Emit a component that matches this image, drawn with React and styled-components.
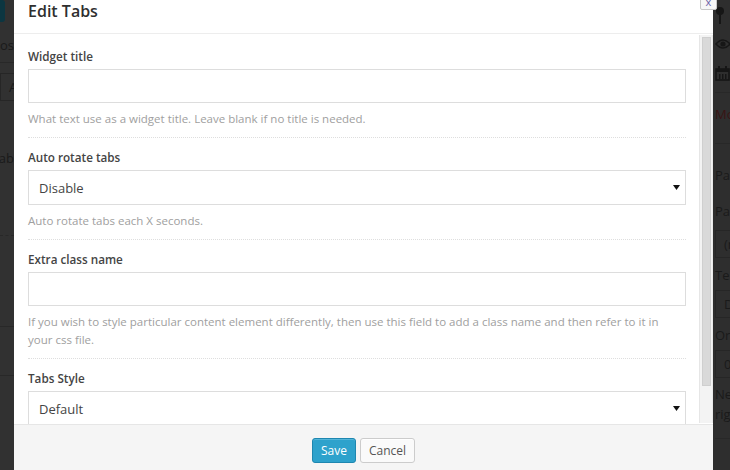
import React from 'react'
import styled, { createGlobalStyle } from 'styled-components'

const GlobalStyle = createGlobalStyle`
  html, body {
    margin: 0;
    padding: 0;
    background: #313131;
  }
  body {
    font-family: "Open Sans", "Liberation Sans", sans-serif;
  }
`

const fields = [
  {
    label: 'Widget title',
    kind: 'input',
    help: ['What text use as a widget title. Leave blank if no title is needed.'],
  },
  {
    label: 'Auto rotate tabs',
    kind: 'select',
    value: 'Disable',
    help: ['Auto rotate tabs each X seconds.'],
  },
  {
    label: 'Extra class name',
    kind: 'input',
    help: [
      'If you wish to style particular content element differently, then use this field to add a class name and then refer to it in',
      'your css file.',
    ],
  },
  {
    label: 'Tabs Style',
    kind: 'select',
    value: 'Default',
    help: [],
  },
]

const Arrow = () => (
  <svg width="7" height="5" viewBox="0 0 7 5">
    <polygon points="0,0 7,0 3.5,5" fill="#111" />
  </svg>
)

const PinIcon = () => (
  <svg width="10" height="18" viewBox="0 0 10 18">
    <circle cx="5" cy="5" r="4" fill="#161616" />
    <rect x="4" y="8" width="2" height="10" fill="#161616" />
  </svg>
)

const EyeIcon = () => (
  <svg width="16" height="12" viewBox="0 0 16 12">
    <path d="M1 6 Q8 -2 15 6 Q8 14 1 6 Z" fill="none" stroke="#161616" strokeWidth="1.6" />
    <circle cx="8" cy="6" r="2.6" fill="#161616" />
  </svg>
)

const CalendarIcon = () => (
  <svg width="15" height="15" viewBox="0 0 15 15">
    <rect x="1" y="3" width="13" height="11" fill="none" stroke="#161616" strokeWidth="1.6" />
    <rect x="1" y="3" width="13" height="3" fill="#161616" />
    <rect x="3" y="0" width="2" height="4" fill="#161616" />
    <rect x="10" y="0" width="2" height="4" fill="#161616" />
    <rect x="4" y="8" width="1.5" height="5" fill="#161616" />
    <rect x="7" y="8" width="1.5" height="5" fill="#161616" />
    <rect x="10" y="8" width="1.5" height="5" fill="#161616" />
  </svg>
)

const App = () => {
  return (
    <>
      <GlobalStyle />
      <Screen>
        <LeftStrip>
          <TealButton />
          <SideText $top={14}>Choos</SideText>
          <SideLine />
          <SideBox $top={10}>Add el</SideBox>
          <SideText $top={48}>Tab</SideText>
          <SideLine $top={68} $dashed />
          <SideLine $top={90} />
          <SideLine $top={48} />
        </LeftStrip>

        <Modal>
          <CloseButton>x</CloseButton>
          <Header>
            <Title>Edit Tabs</Title>
          </Header>
          <Main>
            <Column>
              <Body>
                {fields.map((f) => (
                  <Field key={f.label} $last={f.help.length === 0}>
                    <Label>{f.label}</Label>
                    {f.kind === 'input' ? (
                      <TextInput />
                    ) : (
                      <Select>
                        <span>{f.value}</span>
                        <Arrow />
                      </Select>
                    )}
                    {f.help.length > 0 && (
                      <Help>
                        {f.help.map((line) => (
                          <div key={line}>{line}</div>
                        ))}
                      </Help>
                    )}
                  </Field>
                ))}
              </Body>
            </Column>
            <Rail>
              <Thumb />
            </Rail>
          </Main>
          <Footer>
            <Button $primary>Save</Button>
            <Button>Cancel</Button>
          </Footer>
        </Modal>

        <RightStrip>
          <IconRow $h={30}><PinIcon /></IconRow>
          <IconRow $h={28}><EyeIcon /></IconRow>
          <IconRow $h={30}><CalendarIcon /></IconRow>
          <SideLine $top={4} />
          <RedText>Mo</RedText>
          <SideLine $top={20} />
          <SideText $top={22}>Pa</SideText>
          <SideText $top={18}>Pa</SideText>
          <SideBox $top={10}>(n</SideBox>
          <SideText $top={8}>Te</SideText>
          <SideBox $top={6}>D</SideBox>
          <SideText $top={8}>Or</SideText>
          <SideBox $top={6}>0</SideBox>
          <SideText $top={6} $tight>Ne</SideText>
          <SideText $tight>rig</SideText>
          <SideLine $top={14} />
        </RightStrip>
      </Screen>
    </>
  )
}

const Screen = styled.div`
  width: 730px;
  height: 470px;
  display: flex;
  overflow: hidden;
  background: #313131;
`

const LeftStrip = styled.div`
  width: 14px;
  flex-shrink: 0;
  overflow: hidden;
  display: flex;
  flex-direction: column;
  align-items: flex-end;
  white-space: nowrap;
`

const RightStrip = styled.div`
  width: 17px;
  flex-shrink: 0;
  overflow: hidden;
  display: flex;
  flex-direction: column;
  padding-left: 2px;
  background: #2e2e2e;
  white-space: nowrap;
`

const TealButton = styled.div`
  align-self: flex-start;
  width: 5px;
  height: 22px;
  background: #0c3641;
  border-radius: 0 3px 3px 0;
`

const SideText = styled.div`
  margin-top: ${(p) => p.$top || 0}px;
  font-size: 13px;
  line-height: ${(p) => (p.$tight ? 20 : 18)}px;
  color: #1a1a1a;
`

const RedText = styled(SideText)`
  margin-top: 12px;
  color: #3a1414;
`

const SideBox = styled.div`
  margin-top: ${(p) => p.$top || 0}px;
  width: 60px;
  height: 28px;
  box-sizing: border-box;
  border: 1px solid #262626;
  padding-left: 8px;
  font-size: 13px;
  line-height: 26px;
  color: #1a1a1a;
  align-self: flex-start;
`

const SideLine = styled.div`
  margin-top: ${(p) => p.$top || 8}px;
  width: 100%;
  height: 0;
  border-top: 1px ${(p) => (p.$dashed ? 'dashed' : 'solid')} #282828;
`

const IconRow = styled.div`
  height: ${(p) => p.$h}px;
  display: flex;
  align-items: center;
`

const Modal = styled.div`
  position: relative;
  width: 699px;
  flex-shrink: 0;
  display: flex;
  flex-direction: column;
  background: #fff;
`

const CloseButton = styled.div`
  position: absolute;
  top: -8px;
  right: -4px;
  width: 17px;
  height: 18px;
  box-sizing: border-box;
  border: 1px solid #c8c8c8;
  border-radius: 2px;
  background: #f7f7f7;
  color: #6b5fa8;
  font-size: 11px;
  line-height: 18px;
  text-align: center;
  z-index: 2;
`

const Header = styled.div`
  height: 34px;
  box-sizing: border-box;
  padding: 0 14px;
  border-bottom: 1px solid #ededed;
`

const Title = styled.h1`
  margin: 0;
  font-size: 16px;
  line-height: 23px;
  font-weight: 600;
  color: #2f2f2f;
`

const Main = styled.div`
  flex: 1;
  display: flex;
  min-height: 0;
`

const Column = styled.div`
  flex: 1;
  min-width: 0;
  display: flex;
  flex-direction: column;
`

const Body = styled.div`
  flex: 1;
  overflow: hidden;
  padding: 3px 13px 0 14px;
`

const Field = styled.div`
  padding: 9px 0;
  border-bottom: ${(p) => (p.$last ? 'none' : '1px dotted #dedede')};
`

const Label = styled.div`
  font-size: 11.7px;
  line-height: 20px;
  font-weight: 600;
  color: #444;
  margin-bottom: 3px;
`

const TextInput = styled.div`
  height: 34px;
  box-sizing: border-box;
  border: 1px solid #dddddd;
  background: #fff;
`

const Select = styled.div`
  height: 35px;
  box-sizing: border-box;
  border: 1px solid #dddddd;
  background: #fff;
  display: flex;
  align-items: center;
  justify-content: space-between;
  padding: 0 5px 0 10px;
  font-size: 13px;
  color: #444;
`

const Help = styled.div`
  margin-top: 7px;
  font-size: 11.5px;
  line-height: 18px;
  color: #a0a0a0;
`

const Rail = styled.div`
  width: 14px;
  flex-shrink: 0;
  box-sizing: border-box;
  margin-top: 1px;
  height: 388px;
  background: #f3f3f3;
  border-left: 1px solid #e6e6e6;
  border-right: 1px solid #e9e9e9;
  padding: 2px 1px 0 2px;
`

const Thumb = styled.div`
  height: 349px;
  background: #d9d9d9;
  border: 1px solid #cfcfcf;
  box-sizing: border-box;
`

const Footer = styled.div`
  height: 46px;
  box-sizing: border-box;
  border-top: 1px solid #e6e6e6;
  background: #f5f5f5;
  display: flex;
  justify-content: center;
  gap: 4px;
  padding-top: 13px;
`

const Button = styled.button`
  height: 25px;
  box-sizing: border-box;
  padding: 0 8px;
  border-radius: 3px;
  font-family: "Open Sans", "Liberation Sans", sans-serif;
  font-size: 12px;
  line-height: 23px;
  border: 1px solid ${(p) => (p.$primary ? '#1e87b0' : '#cccccc')};
  background: ${(p) => (p.$primary ? '#2ea2cc' : '#fafafa')};
  color: ${(p) => (p.$primary ? '#fff' : '#555')};
  box-shadow: ${(p) => (p.$primary ? 'inset 0 1px 0 rgba(120,200,230,0.5)' : 'inset 0 1px 0 #fff')};
`

export default App
